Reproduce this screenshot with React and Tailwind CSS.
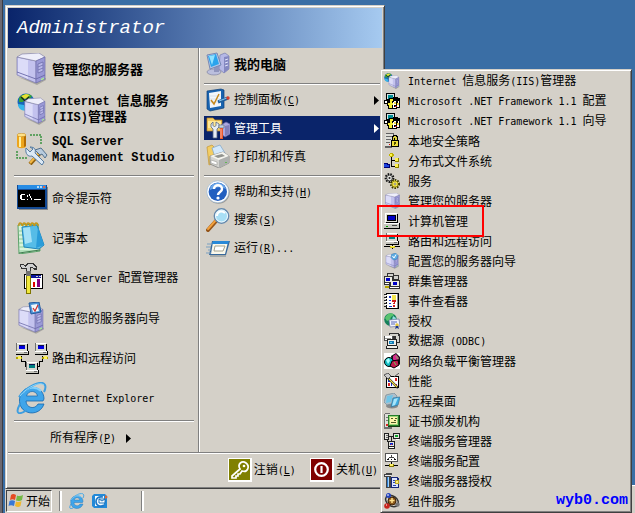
import React from "react";

const CJK = "font-['Noto_Sans_CJK_SC',sans-serif]";

/* Sets Latin runs in the fixed-width face so they take half a Chinese character each. */
function Label({ text, hotkey, bold }) {
  const latin = bold
    ? "font-['Liberation_Mono',monospace] text-[12px]"
    : "font-['DejaVu_Sans_Mono',monospace] text-[10px]";
  const runs = text.match(/[\x20-\x7e]+|[^\x20-\x7e]+/g) || [];
  return (
    <span className="whitespace-pre">
      {runs.map((run, i) =>
        /^[\x20-\x7e]/.test(run) ? (
          <span key={i} className={latin}>{run}</span>
        ) : (
          <span key={i}>{run}</span>
        )
      )}
      {hotkey && (
        <span className={latin}>
          (<u className="underline-offset-1">{hotkey}</u>)
        </span>
      )}
    </span>
  );
}

function Svg({ size, box, crisp, children }) {
  return (
    <svg
      width={size}
      height={size}
      viewBox={`0 0 ${box || size} ${box || size}`}
      shapeRendering={crisp ? "crispEdges" : "auto"}
      className="shrink-0"
      aria-hidden="true"
    >
      {children}
    </svg>
  );
}

/* ---------- shared drawings ---------- */

function ServerShape() {
  return (
    <g>
      <path d="M2 24 21 32 30 27 30 25 21 29Z" fill="#8b8a86" opacity=".6" />
      <path d="M1 4 20 8V30L1 22Z" fill="#c3c2ee" stroke="#7c7bb0" strokeWidth=".7" />
      <path d="M2 5 12 7V26L2 21Z" fill="#e2e2fa" opacity=".8" />
      <path d="M1 4 6 1 23 0 29 4 20 8Z" fill="#eeeefa" stroke="#8584a8" strokeWidth=".7" />
      <path d="M20 8 29 4V26L20 30Z" fill="#9a99d6" stroke="#6d6caa" strokeWidth=".7" />
      <path d="M1 19 20 26 29 22" fill="none" stroke="#6968a8" strokeWidth=".9" />
      <path d="M22 11 27 9V18L22 20Z" fill="#b9b8ea" stroke="#6665a4" strokeWidth=".7" />
      <path d="M22 14 27 12M22 17 27 15" stroke="#6665a4" strokeWidth=".7" />
      <path d="M25 26 28 24.500V26L25 27.500Z" fill="#a9ef8c" />
    </g>
  );
}

function GlobeShape() {
  return (
    <g>
      <circle cx="9" cy="9" r="8.500" fill="#1767b8" />
      <path d="M1 11C1 16 5 18 9 17.500L7 12Z" fill="#36b6ea" />
      <path d="M2 5C5 0 12 0 15 3L12 7 8 5 6 9 2 9Z" fill="#39a335" />
      <path d="M4 3 8 6 13 2 9 1ZM10 9 15 6 17 10 12 14Z" fill="#e8df35" />
      <path d="M8 8 13 7 16 13 11 16Z" fill="#14851f" />
      <path d="M4 4 8 8 12 4" fill="none" stroke="#202010" strokeWidth="1.200" />
    </g>
  );
}

function IeShape() {
  return (
    <g>
      <path d="M27 19H10C10 26 19 28 22 22H28C25 31 15 33 9 29 2 25 2 14 7 9 14 2 28 5 28 17Z" fill="#3fa5ea" stroke="#1467ad" strokeWidth=".8" />
      <path d="M10.500 14H21.500C20.500 8 12 8 10.500 14Z" fill="#d4d0c8" stroke="#1467ad" strokeWidth=".7" />
      <path d="M7 11C11 5 20 4 25 9" fill="none" stroke="#82d0fb" strokeWidth="2" />
      <path d="M4 22C-1 31 2 34 11 28M3 15C10 5 26-3 29 3 30 5 29 8 28 10" fill="none" stroke="#3f9fe0" strokeWidth="2" />
      <path d="M4 14C11 5 24-1 28 3" fill="none" stroke="#8fd6f9" strokeWidth="1" />
    </g>
  );
}

function PcShape({ screen = "#0000e0" }) {
  return (
    <g>
      <path d="M1 0H10V1H11V8H1Z" fill="#000" />
      <path d="M0 1H10V8H0Z" fill="#d8d8d0" />
      <path d="M0 0H10V1H0Z" fill="#fff" />
      <path d="M-1 0H0V8H-1Z" fill="#707070" />
      <path d="M2 2H8V6H2Z" fill={screen} />
      <path d="M2 2H8V3H2Z" fill="#101050" />
      <path d="M-1 8H11V11H-1Z" fill="#c4c4bc" />
      <path d="M-1 8H11V9H-1Z" fill="#fff" />
      <path d="M-1 11H12V12H-1ZM11 8H12V12H11Z" fill="#000" />
      <path d="M7 9H10V10H7Z" fill="#707070" />
    </g>
  );
}

/* ---------- 32px icons ---------- */

const ServerIcon = () => <Svg size={32}><ServerShape /></Svg>;

const IisIcon = () => (
  <Svg size={32}>
    <g transform="translate(1 0)"><GlobeShape /></g>
    <g transform="translate(8 5) scale(.72 .84)"><ServerShape /></g>
  </Svg>
);

const SqlStudioIcon = () => (
  <Svg size={32}>
    <path d="M1 2V13C1 16 10 16 10 13V2Z" fill="#eda51c" />
    <path d="M3 3V14H5V3Z" fill="#fff0a0" />
    <path d="M8 2V14L10 13V2Z" fill="#b36d05" />
    <ellipse cx="5.500" cy="2" rx="4.500" ry="1.700" fill="#ffe287" stroke="#b97a10" strokeWidth=".5" />
    <path d="M14 2H25V12M1 18V25H12" fill="none" stroke="#3b9240" strokeWidth="1.500" strokeDasharray="2 1" />
    <path d="M14 31 24 20" stroke="#91600c" strokeWidth="4" />
    <path d="M14 30 24 19" stroke="#f4b944" strokeWidth="2" />
    <path d="M19 17 25 15 31 22 29 25 26 21 24 22Z" fill="#b8cbdd" stroke="#466584" strokeWidth=".9" />
    <path d="M10 15 14 19 17 16 14 14C19 14 20 17 19 20L28 29 26 32 16 23C12 24 9 21 10 15Z" fill="#dce9f5" stroke="#557ba1" />
  </Svg>
);

const CmdIcon = () => (
  <Svg size={32} crisp>
    <path d="M1 3H31V27H1Z" fill="#144a94" />
    <path d="M2 3H30V7H2Z" fill="#288ce4" />
    <path d="M21 4H23V6H21ZM24 4H26V6H24Z" fill="#b7d9f5" />
    <path d="M27 4H29V6H27Z" fill="#e5653e" />
    <path d="M2 8H29V25H2Z" fill="#000" />
    <path d="M5 12H9V13H6V17H9V18H5V17H4V13H5ZM11 13H12V15H11ZM11 17H12V18H11ZM13 12H14V14H13ZM14 14H15V16H14ZM15 16H16V18H15ZM18 17H25V18H18Z" fill="#fff" />
    <path d="M31 5H32V28H3V27H31Z" fill="#888" />
  </Svg>
);

const NotepadIcon = () => (
  <Svg size={32}>
    <path d="M2 3 22 2 24 29 3 32Z" fill="#d8f3dc" stroke="#5aa169" />
    <path d="M3 9H17M3 13H18M3 17H18M3 21H19M3 25H19M3 29H20" stroke="#8bcb98" />
    <path d="M6 5 21 3 28 23 23 27 8 25Z" fill="#56bce7" stroke="#2185bb" />
    <path d="M7 6 14 5 16 20 9 22Z" fill="#b8eafb" opacity=".8" />
    <path d="M22 5 28 23 20 26Z" fill="#2a9cd9" />
    <path d="M3 4C2 0 6 0 6 4M7 4C6 0 10 0 10 4M11 4C10 0 14 0 14 4M15 4C14 0 18 0 18 4M19 4C18 0 22 0 22 4" fill="none" stroke="#c59619" strokeWidth="1.400" />
    <path d="M3 31 24 28" stroke="#427d51" />
  </Svg>
);

const SqlConfigIcon = () => (
  <Svg size={32} crisp>
    <path d="M8 12H27V27H8Z" fill="#000" />
    <path d="M9 13H26V26H9Z" fill="#fff" />
    <path d="M10 13H25V16H10Z" fill="#0a149c" />
    <path d="M20 14H22V15H20ZM23 14H25V15H23Z" fill="#d4d0c8" />
    <path d="M17 20H19V25H17Z" fill="#e00000" />
    <path d="M21 17H24V25H21Z" fill="#820082" />
    <path d="M10 7H15V14H10Z" fill="#707070" />
    <path d="M10 14H15V32H10Z" fill="#807600" />
    <path d="M11 14H14V31H11Z" fill="#f0e83c" />
    <path d="M4 2H7L9 4 11 1H18L21 5V8H19L16 6H15V9H10V7L5 7Z" fill="#333" />
    <path d="M5 3H7L9 5 12 2H17L20 6H18L16 5H14V9H11V6L6 6Z" fill="#d0d0d0" />
  </Svg>
);

const ConfigServerIcon = () => (
  <Svg size={32}>
    <g transform="translate(2 4) scale(.86 .87)"><ServerShape /></g>
    <path d="M13 1 23 0 25 10 15 12Z" fill="#4e94d5" stroke="#245b9f" />
    <path d="M15 3 21 2 23 9 17 10Z" fill="#f4f8fc" />
    <path d="m17 6 2 3 3-6" fill="none" stroke="#cd3434" strokeWidth="1.300" />
  </Svg>
);

const RoutingIcon = () => (
  <Svg size={32} crisp>
    <path d="M5 14V19H9V24H13M26 14V19H23V24H19" fill="none" stroke="#000" strokeWidth="1" />
    <path d="M0 15H6V17H0ZM26 15H32V17H26Z" fill="#b1a400" />
    <path d="M2 14H5V17H2ZM28 14H31V17H28Z" fill="#fff35c" />
    <g transform="translate(1 1)"><PcShape /></g>
    <g transform="translate(20 1)"><PcShape /></g>
    <g transform="translate(11 20)"><PcShape screen="#008080" /></g>
  </Svg>
);

const IeIcon = () => <Svg size={32}><IeShape /></Svg>;

/* ---------- 24px icons ---------- */

const MyComputerIcon = () => (
  <Svg size={24}>
    <path d="M14 3 19 1 23 4V17L18 21 13 17Z" fill="#b5b8e6" stroke="#777cad" strokeWidth=".7" />
    <path d="M18 5 23 4V17L18 21Z" fill="#8488c1" />
    <path d="M19 8 22 7M19 11 22 10M19 14 22 13" stroke="#e0e3fa" />
    <ellipse cx="8" cy="20" rx="7" ry="3" fill="#bbbfdd" stroke="#777b9b" strokeWidth=".6" />
    <path d="M8 15 13 13V20H8Z" fill="#9095bd" />
    <path d="M1 3 11 1 15 13 4 17Z" fill="#b4c7e8" stroke="#7688b5" />
    <path d="M2 4 10 2 13 12 5 15Z" fill="#29a4ed" />
    <path d="M3 4 9 3 6 13Z" fill="#91e2ff" />
  </Svg>
);

const ControlPanelIcon = () => (
  <Svg size={24}>
    <path d="M1 3 15 1 18 2V20L4 23 1 21Z" fill="#1763b0" stroke="#104178" strokeWidth=".7" />
    <path d="M3 5 15 3V18L4 20Z" fill="#f2f7fb" />
    <path d="M4 8H14M4 11H14M4 14H14" stroke="#c2d3e0" strokeWidth=".6" />
    <path d="m5 12 3 4 5-10" fill="none" stroke="#c78a1c" strokeWidth="1.500" />
    <path d="m12 14 10-4" stroke="#205f9b" strokeWidth="3" />
    <path d="m13 13 8-3" stroke="#88c8f2" strokeWidth="1" />
    <circle cx="22" cy="10" r="1.700" fill="#d83d2a" />
  </Svg>
);

const AdminToolsIcon = () => (
  <Svg size={24}>
    <path d="M1 2H7L9 4H16V15H1Z" fill="#f4cd62" stroke="#bc8420" strokeWidth=".7" />
    <path d="M2 5H15V12H2Z" fill="#ffe796" />
    <path d="M15 9 20 6 24 8V18L19 21 15 18Z" fill="#aaa8e0" stroke="#6362a0" strokeWidth=".7" />
    <path d="M19 10 23 9V18L19 20Z" fill="#807fbb" />
    <path d="M7 6V9C7 11 10 11 10 9V6L13 8V11L11 13V22H7V13L5 11V8Z" fill="#e7edf5" stroke="#566781" strokeWidth=".8" />
    <path d="M13 9H18V12H13Z" fill="#c4d3e0" stroke="#55667b" strokeWidth=".6" />
    <path d="M14 12H17V23H14Z" fill="#e7572b" />
    <path d="M15 13V22" stroke="#ffb19c" />
  </Svg>
);

const PrinterIcon = () => (
  <Svg size={24}>
    <path d="M1 3 6 1 10 5V18L3 21Z" fill="#f3cd63" stroke="#c19436" strokeWidth=".7" />
    <path d="M6 4 14 1 19 9 9 13Z" fill="#d2e8fb" stroke="#7ba2c4" strokeWidth=".7" />
    <path d="M4 12 17 8 23 12V19L13 24 4 20Z" fill="#d4d4d0" stroke="#777" strokeWidth=".7" />
    <path d="M4 12 17 8 23 12 13 16Z" fill="#f5f5ef" />
    <path d="M8 12 16 10 19 12 12 14Z" fill="#92948f" />
    <path d="M13 16V24L23 19V12Z" fill="#aeb0ae" />
    <path d="M5 16 11 18V21L5 19Z" fill="#fff" stroke="#8c8c87" strokeWidth=".5" />
    <path d="M19 18H21V19H19Z" fill="#62b653" />
  </Svg>
);

const HelpIcon = () => (
  <Svg size={24}>
    <circle cx="12.500" cy="12.500" r="11.200" fill="#777" opacity=".6" />
    <circle cx="11.800" cy="11.800" r="11" fill="#fff" stroke="#8caed0" strokeWidth=".6" />
    <circle cx="11.800" cy="11.800" r="9.200" fill="#225fc0" />
    <path d="M4 10C4 1 18 1 20 9 14 6 9 7 4 10Z" fill="#69a6e9" />
    <path d="M8 9C8 4 16 4 16 9 16 12 12 12 12 15" fill="none" stroke="#fff" strokeWidth="2.500" />
    <circle cx="12" cy="18" r="1.600" fill="#fff" />
  </Svg>
);

const SearchIcon = () => (
  <Svg size={24}>
    <path d="m2 22 8-9" stroke="#945418" strokeWidth="4" strokeLinecap="round" />
    <path d="m2 21 8-9" stroke="#f2a03c" strokeWidth="2" strokeLinecap="round" />
    <circle cx="15.500" cy="8" r="7.200" fill="#a8dff5" stroke="#6689ad" strokeWidth="1.400" />
    <circle cx="15.500" cy="8" r="6" fill="none" stroke="#f4fbff" />
    <path d="M11 8C11 4 15 2 19 5" fill="none" stroke="#fff" strokeWidth="2" />
  </Svg>
);

const RunIcon = () => (
  <Svg size={24}>
    <path d="M6 5H24L20 19H3Z" fill="#38699b" />
    <path d="M7 6H22L19 18H5Z" fill="#faf8eb" />
    <path d="M7 5H23L22 8H6Z" fill="#2889d8" />
    <path d="M9 10H19L17 15H8Z" fill="#fff" stroke="#a4a38f" />
    <path d="M1 8H6M0 11H5M2 14H5M0 17H5" stroke="#7ba0c1" />
    <path d="M4 20H20" stroke="#77858b" />
  </Svg>
);

const KeyIcon = () => (
  <Svg size={24} crisp>
    <path d="M0 0H24V24H0Z" fill="#fff" />
    <path d="M1 1H22V22H1Z" fill="#808000" />
    <g shapeRendering="auto">
      <path d="M12 11 4 18V20H8V18H10V16H12L14 13C20 15 22 8 18 5 14 2 9 6 12 11Z" fill="none" stroke="#fff" strokeWidth="1.700" />
      <circle cx="16" cy="8" r="1.300" fill="#fff" />
    </g>
  </Svg>
);

const PowerIcon = () => (
  <Svg size={24} crisp>
    <path d="M0 0H24V24H0Z" fill="#fff" />
    <path d="M1 1H22V22H1Z" fill="#800000" />
    <g shapeRendering="auto">
      <circle cx="11.500" cy="11.500" r="6.300" fill="none" stroke="#fff" strokeWidth="2.200" />
      <path d="M11.500 8V15" stroke="#fff" strokeWidth="2.200" />
    </g>
  </Svg>
);

/* ---------- 16px icons ---------- */

const SmallServer = () => (
  <Svg size={16} box={32}><g transform="translate(2 0)"><ServerShape /></g></Svg>
);

const SmallIis = () => (
  <Svg size={16} box={32}>
    <GlobeShape />
    <g transform="translate(9 5) scale(.72 .84)"><ServerShape /></g>
  </Svg>
);

const DotNet = () => (
  <Svg size={16} crisp>
    <path d="M2 0H11V7H2Z" fill="#000" />
    <path d="M3 1H10V6H3Z" fill="#d8e6e6" />
    <path d="M4 2H9V6H4Z" fill="#008c94" />
    <path d="M0 7H8V11H0Z" fill="#000" />
    <path d="M1 8H7V10H1Z" fill="#fff" />
    <path d="M5 5H9V4H14V5H16V15H13V16H4V13H3V8H5Z" fill="#000" />
    <path d="M6 6H9V8H8V10H9V12H8V15H5V12H4V10H6Z" fill="#f6ee33" />
    <path d="M10 8H12V9H10ZM9 9H10V11H12V12H10V14H12V15H9ZM14 8H15V10H14ZM13 12H15V14H13Z" fill="#fff" />
    <path d="M10 9H12V11H10ZM13 10H15V12H13Z" fill="#f2d94a" />
    <path d="M11 13H13V14H11Z" fill="#d22020" />
  </Svg>
);

const Policy = () => (
  <Svg size={16} crisp>
    <path d="M1 1 2 0H9L10 1V14H1Z" fill="#606060" />
    <path d="M1 1H9V13H1Z" fill="#deded8" />
    <path d="M2 3H8V4H2ZM2 6H7V7H2ZM2 9H6V10H2ZM1 14H8V15H1Z" fill="#686868" />
    <path d="M7 7H8V3H9V2H13V3H14V7H15V14H7Z" fill="#000" />
    <path d="M9 7V4H10V3H12V4H13V7H11V5H10V7Z" fill="#ddd23e" />
    <path d="M8 8H14V13H8Z" fill="#eee03c" />
    <path d="M10 9H12V11H11V12H10Z" fill="#504a00" />
    <path d="M5 11H6V12H5Z" fill="#e00000" />
  </Svg>
);

const Dfs = () => (
  <Svg size={16} crisp>
    <path d="M7 3H8V14H7ZM8 7H12V8H8ZM8 13H12V14H8Z" fill="#000" />
    <path d="M6 0H9V1H10V3H9V4H6V3H5V1H6Z" fill="#c0b400" />
    <path d="M6 1H8V3H6ZM11 5H14V8H11ZM11 11H14V14H11Z" fill="#fff250" />
    <path d="M11 8H15V9H11ZM11 14H15V15H11ZM14 5H15V8H14ZM14 11H15V14H14Z" fill="#8d8200" />
    <path d="M0 10H4V11H6V15H0Z" fill="#000070" />
    <path d="M0 11H3V12H5V14H0Z" fill="#1d43dd" />
  </Svg>
);

const Gears = () => (
  <Svg size={16}>
    <circle cx="5.500" cy="5" r="3.500" fill="#fff" stroke="#111" strokeWidth="2.800" strokeDasharray="1.400 1" />
    <circle cx="5.500" cy="5" r="2.900" fill="#e4e4e0" stroke="#222" strokeWidth=".8" />
    <circle cx="5.500" cy="5" r="1" fill="#222" />
    <circle cx="11" cy="11" r="3.700" fill="#fff259" stroke="#3f3900" strokeWidth="2.800" strokeDasharray="1.400 1" />
    <circle cx="11" cy="11" r="3" fill="#f8ea4b" stroke="#8d8204" strokeWidth=".7" />
    <circle cx="11" cy="11" r="1" fill="#fff" stroke="#333" strokeWidth=".5" />
  </Svg>
);

const Computer = () => (
  <Svg size={16} crisp>
    <path d="M2 0H13V1H14V10H2Z" fill="#000" />
    <path d="M1 1H13V9H1Z" fill="#deded6" />
    <path d="M1 0H13V1H1ZM1 1H2V9H1Z" fill="#fff" />
    <path d="M3 2H12V8H3Z" fill="#000" />
    <path d="M4 3H11V7H4Z" fill="#0000c4" />
    <path d="M0 10H15V15H0Z" fill="#c8c8c0" />
    <path d="M0 10H15V11H0Z" fill="#fff" />
    <path d="M0 15H16V16H0ZM15 10H16V16H15Z" fill="#000" />
    <path d="M2 13H4V14H2Z" fill="#00a000" />
    <path d="M8 12H13V13H8Z" fill="#444" />
  </Svg>
);

const SmallRouting = () => (
  <Svg size={16} crisp>
    <g transform="translate(3 0)"><PcShape screen="#008080" /></g>
    <path d="M0 13H16V14H0ZM8 12H9V16H8Z" fill="#000" />
    <path d="M6 13H11V15H6Z" fill="#d8ca18" />
    <path d="M7 13H10V14H7Z" fill="#fff35c" />
  </Svg>
);

const SmallConfigServer = () => (
  <Svg size={16} box={32}>
    <g transform="translate(3 2) scale(.88 .92)"><ServerShape /></g>
    <path d="M15 3 23 0 28 5 26 12 19 14 14 9Z" fill="#5faee4" stroke="#2f72aa" />
    <path d="m17 6 3 4 4-7" fill="none" stroke="#fff" strokeWidth="2" />
  </Svg>
);

const Cluster = () => (
  <Svg size={16} crisp>
    <path d="M3 0H10V2H15V7H16V16H5V12H0V3H3Z" fill="#333" />
    <path d="M4 1H9V3H4ZM10 3H14V6H10Z" fill="#d0d0cc" />
    <path d="M1 4H8V9H1ZM7 8H15V13H7Z" fill="#ecece4" />
    <path d="M2 5H6V8H2ZM9 9H13V12H9Z" fill="#0000c8" />
    <path d="M1 10H5V11H1ZM6 14H15V15H6Z" fill="#fff" />
    <path d="M1 13H5V15H1Z" fill="#b5a600" />
  </Svg>
);

const EventLog = () => (
  <Svg size={16} crisp>
    <path d="M2 0H15V16H2Z" fill="#000" />
    <path d="M3 1H13V15H3Z" fill="#fff" />
    <path d="M13 1H14V15H13Z" fill="#8b8b8b" />
    <path d="M0 1H3V2H0ZM0 4H3V5H0ZM0 7H3V8H0ZM0 10H3V11H0ZM0 13H3V14H0Z" fill="#222" />
    <path d="M1 2H3V3H1ZM1 5H3V6H1ZM1 8H3V9H1ZM1 11H3V12H1Z" fill="#fff" />
    <path d="M5 3H7V5H5Z" fill="#2039c9" />
    <path d="M8 2H12V7H8Z" fill="#f4e74c" />
    <path d="M5 7H7V8H5ZM5 10H7V11H5ZM5 13H8V14H5Z" fill="#1538c8" />
    <path d="M8 7H12V9H11V11H9V10H10V9H8ZM9 12H11V14H9Z" fill="#d11b1b" />
  </Svg>
);

const License = () => (
  <Svg size={16}>
    <circle cx="6.500" cy="6.500" r="6.300" fill="#16805b" />
    <path d="M1 5C3 0 8-1 10 2L7 4 6 7 3 8Z" fill="#59c36f" />
    <path d="M9 3 12 5 11 8 8 7Z" fill="#94dfe1" />
    <path d="M5 7 15 6 16 13 6 14Z" fill="#f3f4ff" stroke="#6e77a2" strokeWidth=".7" />
    <path d="M7 9H13M7 11H11" stroke="#5667b5" />
    <circle cx="13" cy="12" r="1.700" fill="#e2c43c" />
    <path d="m12 13-1 3 2-1 2 1-1-3Z" fill="#1c368c" />
  </Svg>
);

const Odbc = () => (
  <Svg size={16} crisp>
    <path d="M5 0H15V1H16V10H9V2H5Z" fill="#333" />
    <path d="M6 1H14V3H6ZM12 3H15V9H12Z" fill="#d3d3cd" />
    <path d="M0 3H9V8H0Z" fill="#555" />
    <path d="M1 3H8V7H1Z" fill="#fff" />
    <path d="M1 5H7V6H1Z" fill="#9a9a95" />
    <path d="M3 6H13V13H14V16H2V13H3Z" fill="#222" />
    <path d="M4 7H12V12H4ZM3 13H13V15H3Z" fill="#f0f0ea" />
    <path d="M5 8H10V11H5Z" fill="#167bb5" />
    <path d="M6 9H8V10H6Z" fill="#64d5ec" />
  </Svg>
);

const LoadBalance = () => (
  <Svg size={16}>
    <path d="M0 0H16V16H0Z" fill="#fff" />
    <path d="M7 3 12 0 16 4V11L12 14 8 11Z" fill="#111" />
    <path d="M9 3 12 1 15 5 13 9 9 7Z" fill="#d52c8d" />
    <circle cx="5" cy="9" r="4.500" fill="#12bac0" stroke="#000" />
    <path d="M2 7 5 5 6 8 4 11Z" fill="#a6ffff" />
    <path d="M8 8 14 7 15 12 10 15 6 13Z" fill="#c01b4e" stroke="#000" />
    <path d="M10 9 12 12M12 3 14 6" stroke="#6dd058" />
  </Svg>
);

const Performance = () => (
  <Svg size={16} crisp>
    <path d="M2 3H15V15H2Z" fill="#000" />
    <path d="M3 4H14V14H3Z" fill="#fff" />
    <path d="M4 10H6V13H4ZM11 5H13V8H11Z" fill="#d22" />
    <path d="M7 9H8V13H7ZM4 7H6V9H4Z" fill="#1b2bc3" />
    <path d="M11 11H13V13H11Z" fill="#a320a3" />
    <g shapeRendering="auto">
      <path d="m4 5 10 10" stroke="#111" strokeWidth="2.400" />
      <path d="m5 6 8 8" stroke="#f0d842" strokeWidth="1.300" />
      <path d="M0 2 4 0 7 3 4 6 2 4ZM10 4 15 0" fill="#ccc" stroke="#555" />
    </g>
  </Svg>
);

const RemoteDesktops = () => (
  <Svg size={16}>
    <ellipse cx="8" cy="13" rx="6" ry="2.500" fill="#888a8b" />
    <path d="M2 2 10 0 13 3 11 10 3 12 0 9Z" fill="#aebfcb" stroke="#718997" strokeWidth=".7" />
    <path d="M3 3 9 2 7 9 2 10Z" fill="#70c5e8" />
    <path d="m9 5 7-1-2 8-7 2Z" fill="#3dace2" stroke="#397497" strokeWidth=".7" />
    <path d="m10 6 4-1-3 7-3 1Z" fill="#a7e4f9" />
  </Svg>
);

const CertAuthority = () => (
  <Svg size={16} crisp>
    <path d="M1 0H6V14H8V16H0V1H1Z" fill="#707070" />
    <path d="M1 1H6V14H1Z" fill="#deded9" />
    <path d="M2 4H5V5H2ZM2 7H5V8H2Z" fill="#777" />
    <path d="M4 2H16V14H4Z" fill="#173b12" />
    <path d="M4 2H15V13H4Z" fill="#267e2a" />
    <path d="M5 3H14V12H5Z" fill="#9bd67c" />
    <path d="M6 4H13V11H6Z" fill="#fff5ac" />
    <path d="M7 5H9V6H7ZM11 5H13V6H11ZM7 9H12V10H7ZM10 7H12V8H10Z" fill="#4c5b26" />
    <path d="M2 11H4V13H2Z" fill="#db2929" />
  </Svg>
);

const TsManager = () => (
  <Svg size={16} crisp>
    <path d="M0 0H5V7H0ZM9 0H16V6H9ZM4 8H11V16H4ZM5 3H9V4H5ZM7 4H8V8H7ZM3 7H4V9H3Z" fill="#202020" />
    <path d="M1 1H4V6H1ZM10 1H15V5H10ZM5 9H10V13H5Z" fill="#e4e4de" />
    <path d="M2 2H4V3H2ZM2 4H4V5H2Z" fill="#666" />
    <path d="M11 2H14V4H11Z" fill="#10a42b" />
    <path d="M6 10H9V12H6Z" fill="#0929d4" />
    <path d="M7 11H8V12H7Z" fill="#e52b2b" />
    <path d="M5 14H10V15H5ZM12 6H15V7H12Z" fill="#fff" />
  </Svg>
);

const TsConfig = () => (
  <Svg size={16} crisp>
    <path d="M1 0H14V9H1Z" fill="#555" />
    <path d="M2 1H13V8H2Z" fill="#fff" />
    <path d="M7 2H8V4H10V5H11V7H10V5H5V7H4V5H5V4H7Z" fill="#444" />
    <path d="M3 6H5V7H3ZM10 6H12V7H10ZM7 6H8V7H7Z" fill="#111" />
    <path d="M7 9H8V12H14V13H1V12H7Z" fill="#000" />
    <path d="M5 11H10V14H5Z" fill="#847900" />
    <path d="M6 11H9V13H6Z" fill="#fff16b" />
  </Svg>
);

const TsLicensing = () => (
  <Svg size={16} crisp>
    <path d="M0 1H2V0H8V2H7V15H2V4H0Z" fill="#444" />
    <path d="M1 2H7V3H1Z" fill="#ededf0" />
    <path d="M3 4H5V14H3Z" fill="#2c77c9" />
    <path d="M4 4H5V14H4Z" fill="#9bd3ff" />
    <path d="M7 4H13L15 6V15H7Z" fill="#172779" />
    <path d="M8 5H13V7H14V14H8Z" fill="#dce5ff" />
    <path d="M9 7H12V8H9ZM9 9H11V10H9ZM9 12H12V13H9Z" fill="#2942a8" />
    <path d="M11 7H15V11H11Z" fill="#bca726" />
    <path d="M12 8H14V10H12Z" fill="#fff384" />
  </Svg>
);

const ComponentServices = () => (
  <Svg size={16}>
    <ellipse cx="8" cy="8" rx="7" ry="5" fill="none" stroke="#333" strokeWidth="1.400" transform="rotate(35 8 8)" />
    <circle cx="8" cy="8" r="4" fill="#8b581b" stroke="#3e2408" />
    <path d="M5.500 7.500H10.500M8 5V10" stroke="#ffe28d" strokeWidth="1.500" />
    <circle cx="4.500" cy="2.500" r="2.500" fill="#2443bd" />
    <circle cx="3" cy="13" r="2.800" fill="#c9241c" />
    <circle cx="13.500" cy="11.500" r="2.200" fill="#777" />
    <path d="M3 2H5M2 12H3" stroke="#fff" />
  </Svg>
);

const WindowsFlag = () => (
  <Svg size={16}>
    <path d="M3 2C5 .500 6 1 8 2L7 7C5 6 4 6 2 7Z" fill="#e54b23" />
    <path d="M9 2.500C11 3.500 13 3 15 2L14 7C12 8.500 10 8 8 7.500Z" fill="#74b943" />
    <path d="M1.500 8C3 7 5 7 7 8L6 13C4 12 2 12 .500 13Z" fill="#3878d5" />
    <path d="M8 8.500C10 9.500 12 9 13.500 8L12.500 13C10.500 14.500 9 14 7 13Z" fill="#efb72e" />
  </Svg>
);

const SmallIe = () => <Svg size={16} box={32}><IeShape /></Svg>;

const Outlook = () => (
  <Svg size={16}>
    <path d="M2 1H13L15 3V15H2L0 13V3Z" fill="#2289d8" />
    <path d="M3 3H12V13H3Z" fill="#f5fbff" />
    <path d="M11 4C6 3 4 6 4 8.500 4 13 9 14 12 12" fill="none" stroke="#1c78c8" strokeWidth="1.700" />
    <path d="M7 6H13V10H7ZM7 6 10 8 13 6" fill="#fff" stroke="#1b72bb" />
    <path d="m13 2 3 2-3 2Z" fill="#e06830" />
  </Svg>
);

/* ---------- menu data ---------- */

const pinned = [
  { icon: ServerIcon, lines: ["管理您的服务器"] },
  { icon: IisIcon, lines: ["Internet 信息服务", "(IIS)管理器"] },
  { icon: SqlStudioIcon, lines: ["SQL Server", "Management Studio"] },
];

const recent = [
  { icon: CmdIcon, lines: ["命令提示符"] },
  { icon: NotepadIcon, lines: ["记事本"] },
  { icon: SqlConfigIcon, lines: ["SQL Server 配置管理器"] },
  { icon: ConfigServerIcon, lines: ["配置您的服务器向导"] },
  { icon: RoutingIcon, lines: ["路由和远程访问"] },
  { icon: IeIcon, lines: ["Internet Explorer"] },
];

const places = [
  { icon: ControlPanelIcon, text: "控制面板", hotkey: "C", sub: true },
  { icon: AdminToolsIcon, text: "管理工具", sub: true, active: true },
  { icon: PrinterIcon, text: "打印机和传真" },
];

const adminTools = [
  [SmallIis, "Internet 信息服务(IIS)管理器"],
  [DotNet, "Microsoft .NET Framework 1.1 配置"],
  [DotNet, "Microsoft .NET Framework 1.1 向导"],
  [Policy, "本地安全策略"],
  [Dfs, "分布式文件系统"],
  [Gears, "服务"],
  [SmallServer, "管理您的服务器"],
  [Computer, "计算机管理", true],
  [SmallRouting, "路由和远程访问"],
  [SmallConfigServer, "配置您的服务器向导"],
  [Cluster, "群集管理器"],
  [EventLog, "事件查看器"],
  [License, "授权"],
  [Odbc, "数据源 (ODBC)"],
  [LoadBalance, "网络负载平衡管理器"],
  [Performance, "性能"],
  [RemoteDesktops, "远程桌面"],
  [CertAuthority, "证书颁发机构"],
  [TsManager, "终端服务管理器"],
  [TsConfig, "终端服务配置"],
  [TsLicensing, "终端服务器授权"],
  [ComponentServices, "组件服务"],
];

/* ---------- menu parts ---------- */

const Arrow = () => (
  <svg width="5" height="9" viewBox="0 0 5 9" className="shrink-0" fill="currentColor" aria-hidden="true">
    <path d="M0 0 5 4.500 0 9Z" />
  </svg>
);

const Rule = () => <hr className="h-[2px] border-0 border-t border-b border-t-[#808080] border-b-white" />;

function ProgramItem({ icon: Icon, lines, bold }) {
  return (
    <button className="flex h-10 w-full items-center gap-1 pl-2 text-left">
      <Icon />
      <span className={bold ? "flex flex-col text-[13px] leading-[14px] font-bold" : "flex flex-col text-[12px] leading-4"}>
        {lines.map((line) => (
          <Label key={line} text={line} bold={bold} />
        ))}
      </span>
    </button>
  );
}

function PlaceItem({ icon: Icon, text, hotkey, sub, active, bold }) {
  return (
    <button
      className={`flex h-6 w-full items-center gap-1 pr-px pl-[2px] text-left leading-4 ${
        active ? "bg-[#0a246a] text-white" : ""
      } ${bold ? "text-[13px] font-bold" : "text-[12px]"}`}
    >
      <Icon />
      <span className="grow"><Label text={text} hotkey={hotkey} bold={bold} /></span>
      {sub && <Arrow />}
    </button>
  );
}

const raised =
  "border border-t-[#d4d0c8] border-l-[#d4d0c8] border-r-[#404040] border-b-[#404040] bg-[#d4d0c8] shadow-[inset_1px_1px_0_#fff,inset_-1px_-1px_0_#808080]";

function StartMenu() {
  return (
    <nav aria-label="开始" className={`absolute bottom-6 left-[5px] w-[380px] p-[2px] ${raised}`}>
      <header className="flex h-10 items-center bg-linear-to-r from-[#0a246a] to-[#a6caf0] pl-[9px]">
        <h1 className="font-['Liberation_Mono',monospace] text-[19px] leading-6 text-white italic">Administrator</h1>
      </header>
      <div className="flex">
        <div className="w-[191px] border-r border-[#808080] pt-px pb-[2px]">
          {pinned.map((item) => (
            <ProgramItem key={item.lines[0]} {...item} bold />
          ))}
          <div className="mr-1 ml-[6px] pt-[6px] pb-px"><Rule /></div>
          {recent.map((item) => (
            <ProgramItem key={item.lines[0]} {...item} />
          ))}
          <div className="mr-1 ml-[6px] pt-[2px]"><Rule /></div>
          <button className="mt-1 flex h-6 w-full items-center gap-[10px] pl-[42px] text-[12px] leading-4">
            <Label text="所有程序" hotkey="P" />
            <Arrow />
          </button>
        </div>
        <div className="flex min-w-0 grow flex-col border-l border-white pr-[2px] pl-1 pt-1">
          <PlaceItem icon={MyComputerIcon} text="我的电脑" bold />
          <div className="pt-[7px] pb-[3px]"><Rule /></div>
          <div className="flex flex-col gap-1">
            {places.map((item) => (
              <PlaceItem key={item.text} {...item} />
            ))}
          </div>
          <div className="pt-[7px] pb-[3px]"><Rule /></div>
          <div className="flex flex-col gap-1">
            <PlaceItem icon={HelpIcon} text="帮助和支持" hotkey="H" />
            <PlaceItem icon={SearchIcon} text="搜索" hotkey="S" />
            <button className="flex h-6 w-full items-center gap-1 pl-[2px] text-left text-[12px] leading-4">
              <RunIcon />
              <span className="flex items-baseline">
                <Label text="运行" hotkey="R" />
                <Label text="..." />
              </span>
            </button>
          </div>
        </div>
      </div>
      <Rule />
      <footer className="flex h-8 items-center justify-end gap-[14px] pr-1 text-[12px] leading-4">
        <button className="flex items-center gap-[2px]">
          <KeyIcon />
          <Label text="注销" hotkey="L" />
        </button>
        <button className="flex items-center gap-[2px]">
          <PowerIcon />
          <Label text="关机" hotkey="U" />
        </button>
      </footer>
    </nav>
  );
}

function AdminMenu() {
  return (
    <ul className={`absolute top-[69px] left-[380px] w-[252px] p-px text-[12px] leading-4 ${raised}`}>
      {adminTools.map(([Icon, text, marked]) => (
        <li key={text} className="relative">
          <button className="flex h-5 w-full items-center gap-2 pl-[2px] text-left">
            <Icon />
            <Label text={text} />
          </button>
          {marked && (
            <span className="pointer-events-none absolute -top-[6px] -left-[5px] z-10 h-8 w-[107px] border-2 border-[#ff0000]" />
          )}
        </li>
      ))}
    </ul>
  );
}

function Divider() {
  return <span className="h-5 w-[3px] border-r-2 border-l border-l-[#808080] border-r-white" />;
}

function Taskbar() {
  return (
    <div className="mt-auto ml-[5px] flex h-7 items-center border-t border-white bg-[#d4d0c8] pt-[3px]">
      <button className="ml-px flex h-[22px] w-[46px] items-center gap-[2px] border border-t-[#404040] border-l-[#404040] border-r-white border-b-white pl-px text-[12px] leading-4 whitespace-nowrap">
        <WindowsFlag />
        <span>开始</span>
      </button>
      <div className="ml-[7px] flex items-center">
        <Divider />
        <button aria-label="Internet Explorer" className="ml-[7px]"><SmallIe /></button>
        <button aria-label="Outlook Express" className="ml-[7px]"><Outlook /></button>
        <div className="ml-[33px] flex"><Divider /></div>
      </div>
    </div>
  );
}

export default function App() {
  return (
    <main className={`relative flex h-screen w-full flex-col overflow-hidden bg-[#3a6ea5] text-black ${CJK}`}>
      <div className="absolute inset-y-0 left-0 w-[3px] border-r border-[#3c3c44] bg-[#6c6870]" />
      <Taskbar />
      <StartMenu />
      <AdminMenu />
      <p className="absolute right-[7px] bottom-[2px] font-['Liberation_Mono',monospace] text-[15px] leading-5 font-bold text-[#0000ff]">
        wyb0.com
      </p>
    </main>
  );
}
